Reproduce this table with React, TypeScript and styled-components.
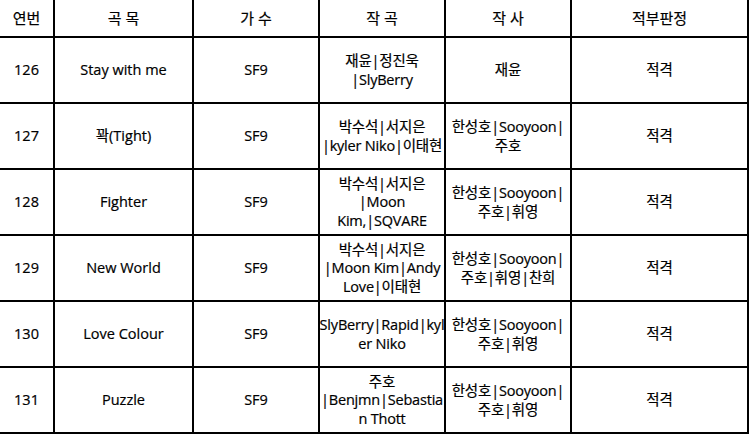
import React from 'react';
import styled, { createGlobalStyle } from 'styled-components';

const GlobalStyle = createGlobalStyle`
  html, body {
    margin: 0;
    padding: 0;
    background: #ffffff;
  }
  body {
    font-family: "Open Sans", "Noto Sans CJK KR", sans-serif;
    color: #000000;
  }
`;

const Grid = styled.div`
  display: grid;
  grid-template-columns: 55px 139px 126px 126px 126px 177px;
  grid-template-rows: 38px repeat(6, 66px);
  width: 749px;
`;

const Cell = styled.div<{ $header?: boolean }>`
  box-sizing: border-box;
  display: flex;
  align-items: center;
  justify-content: center;
  text-align: center;
  border-right: 2px solid #000;
  border-bottom: 2px solid #000;
  font-size: ${(p) => (p.$header ? '15px' : '14.5px')};
  line-height: 18.5px;
  white-space: nowrap;
  padding-top: 1px;
  -webkit-text-stroke: 0.2px #000;
`;

const Line = styled.div`
  letter-spacing: -0.2px;
`;

type Row = {
  no: string;
  title: string;
  singer: string;
  composer: string[];
  lyricist: string[];
  verdict: string;
};

const headers = ['연번', '곡 목', '가 수', '작 곡', '작 사', '적부판정'];

const rows: Row[] = [
  {
    no: '126',
    title: 'Stay with me',
    singer: 'SF9',
    composer: ['재윤|정진욱', '|SlyBerry'],
    lyricist: ['재윤'],
    verdict: '적격',
  },
  {
    no: '127',
    title: '꽉(Tight)',
    singer: 'SF9',
    composer: ['박수석|서지은', '|kyler Niko|이태현'],
    lyricist: ['한성호|Sooyoon|', '주호'],
    verdict: '적격',
  },
  {
    no: '128',
    title: 'Fighter',
    singer: 'SF9',
    composer: ['박수석|서지은', '|Moon', 'Kim,|SQVARE'],
    lyricist: ['한성호|Sooyoon|', '주호|휘영'],
    verdict: '적격',
  },
  {
    no: '129',
    title: 'New World',
    singer: 'SF9',
    composer: ['박수석|서지은', '|Moon Kim|Andy', 'Love|이태현'],
    lyricist: ['한성호|Sooyoon|', '주호|휘영|찬희'],
    verdict: '적격',
  },
  {
    no: '130',
    title: 'Love Colour',
    singer: 'SF9',
    composer: ['SlyBerry|Rapid|kyl', 'er Niko'],
    lyricist: ['한성호|Sooyoon|', '주호|휘영'],
    verdict: '적격',
  },
  {
    no: '131',
    title: 'Puzzle',
    singer: 'SF9',
    composer: ['주호', '|Benjmn|Sebastia', 'n Thott'],
    lyricist: ['한성호|Sooyoon|', '주호|휘영'],
    verdict: '적격',
  },
];

const Lines: React.FC<{ lines: string[] }> = ({ lines }) => (
  <div>
    {lines.map((line, i) => (
      <Line key={i}>{line}</Line>
    ))}
  </div>
);

export default function App() {
  return (
    <>
      <GlobalStyle />
      <Grid>
        {headers.map((h) => (
          <Cell key={h} $header>
            {h}
          </Cell>
        ))}
        {rows.map((r) => (
          <React.Fragment key={r.no}>
            <Cell>{r.no}</Cell>
            <Cell>{r.title}</Cell>
            <Cell>{r.singer}</Cell>
            <Cell>
              <Lines lines={r.composer} />
            </Cell>
            <Cell>
              <Lines lines={r.lyricist} />
            </Cell>
            <Cell>{r.verdict}</Cell>
          </React.Fragment>
        ))}
      </Grid>
    </>
  );
}
